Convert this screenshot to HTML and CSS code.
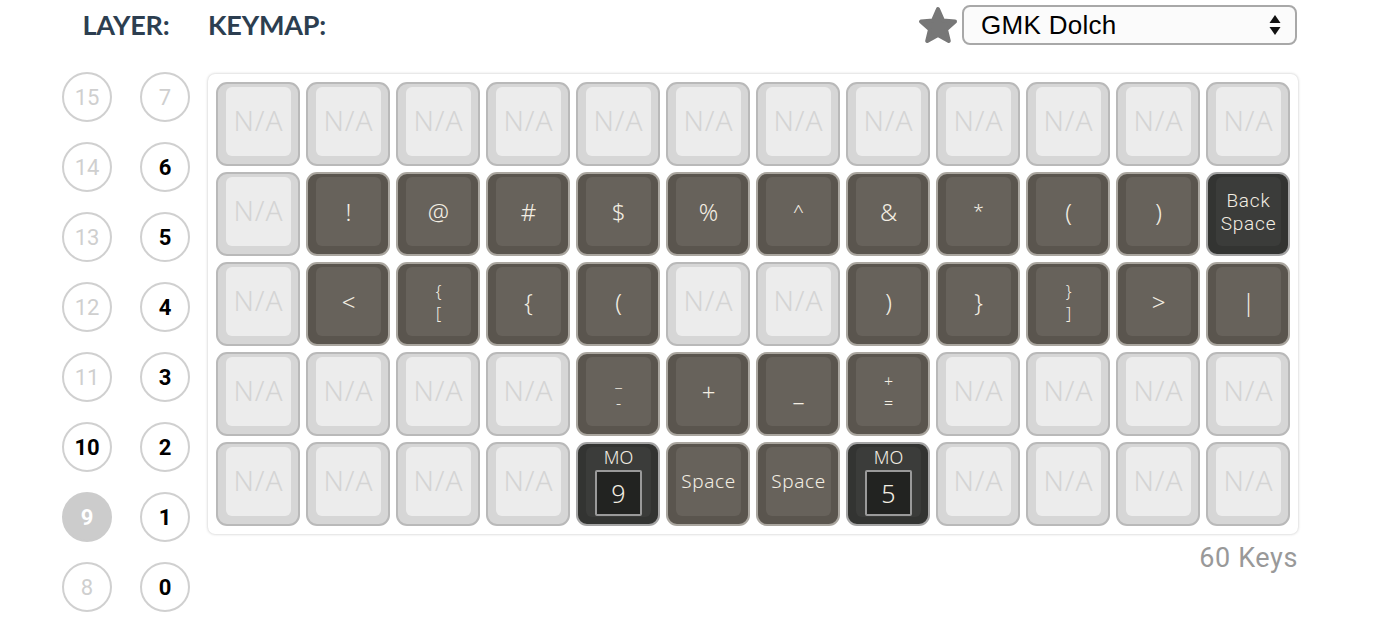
FILE: index.html
```html
<!DOCTYPE html>
<html>
<head>
    <title>Keymap</title>
    <link rel="stylesheet" href="styles.css">
</head>
<body>
<div class="page">
    <div class="layers">
        <h2 class="title layer-title">LAYER:</h2>
        <div class="layer-grid">
            <div class="layer">15</div>
            <div class="layer">14</div>
            <div class="layer">13</div>
            <div class="layer">12</div>
            <div class="layer">11</div>
            <div class="layer used">10</div>
            <div class="layer current">9</div>
            <div class="layer">8</div>
            <div class="layer">7</div>
            <div class="layer used">6</div>
            <div class="layer used">5</div>
            <div class="layer used">4</div>
            <div class="layer used">3</div>
            <div class="layer used">2</div>
            <div class="layer used">1</div>
            <div class="layer used">0</div>
        </div>
    </div>
    <div class="keymap">
        <div class="keymap-head">
            <h2 class="title">KEYMAP:</h2>
            <div class="colorway">
                <svg class="star" width="40" height="38" viewBox="0 0 40 38">
                    <polygon points="20,3 25,14.5 37,15.5 28,23.5 30.8,35 20,29 9.2,35 12,23.5 3,15.5 15,14.5" fill="#777" stroke="#777" stroke-width="4" stroke-linejoin="round"/>
                </svg>
                <div class="select">
                    <span>GMK Dolch</span>
                    <svg width="12" height="22" viewBox="0 0 12 22">
                        <polygon points="6,1 11.5,9 0.5,9" fill="#111"/>
                        <polygon points="0.5,13 11.5,13 6,21" fill="#111"/>
                    </svg>
                </div>
            </div>
        </div>
        <div class="board">
            <!-- row 1 -->
            <div class="key na"><div class="cap">N/A</div></div>
            <div class="key na"><div class="cap">N/A</div></div>
            <div class="key na"><div class="cap">N/A</div></div>
            <div class="key na"><div class="cap">N/A</div></div>
            <div class="key na"><div class="cap">N/A</div></div>
            <div class="key na"><div class="cap">N/A</div></div>
            <div class="key na"><div class="cap">N/A</div></div>
            <div class="key na"><div class="cap">N/A</div></div>
            <div class="key na"><div class="cap">N/A</div></div>
            <div class="key na"><div class="cap">N/A</div></div>
            <div class="key na"><div class="cap">N/A</div></div>
            <div class="key na"><div class="cap">N/A</div></div>
            <!-- row 2 -->
            <div class="key na"><div class="cap">N/A</div></div>
            <div class="key"><div class="cap">!</div></div>
            <div class="key"><div class="cap">@</div></div>
            <div class="key"><div class="cap">#</div></div>
            <div class="key"><div class="cap">$</div></div>
            <div class="key"><div class="cap">%</div></div>
            <div class="key"><div class="cap small">^</div></div>
            <div class="key"><div class="cap">&amp;</div></div>
            <div class="key"><div class="cap small">*</div></div>
            <div class="key"><div class="cap">(</div></div>
            <div class="key"><div class="cap">)</div></div>
            <div class="key mod"><div class="cap word two"><span>Back</span><span>Space</span></div></div>
            <!-- row 3 -->
            <div class="key na"><div class="cap">N/A</div></div>
            <div class="key"><div class="cap">&lt;</div></div>
            <div class="key"><div class="cap pair"><span>{</span><span>[</span></div></div>
            <div class="key"><div class="cap">{</div></div>
            <div class="key"><div class="cap">(</div></div>
            <div class="key na"><div class="cap">N/A</div></div>
            <div class="key na"><div class="cap">N/A</div></div>
            <div class="key"><div class="cap">)</div></div>
            <div class="key"><div class="cap">}</div></div>
            <div class="key"><div class="cap pair"><span>}</span><span>]</span></div></div>
            <div class="key"><div class="cap">&gt;</div></div>
            <div class="key"><div class="cap">|</div></div>
            <!-- row 4 -->
            <div class="key na"><div class="cap">N/A</div></div>
            <div class="key na"><div class="cap">N/A</div></div>
            <div class="key na"><div class="cap">N/A</div></div>
            <div class="key na"><div class="cap">N/A</div></div>
            <div class="key"><div class="cap pair"><span>_</span><span>-</span></div></div>
            <div class="key"><div class="cap">+</div></div>
            <div class="key"><div class="cap">_</div></div>
            <div class="key"><div class="cap pair"><span>+</span><span>=</span></div></div>
            <div class="key na"><div class="cap">N/A</div></div>
            <div class="key na"><div class="cap">N/A</div></div>
            <div class="key na"><div class="cap">N/A</div></div>
            <div class="key na"><div class="cap">N/A</div></div>
            <!-- row 5 -->
            <div class="key na"><div class="cap">N/A</div></div>
            <div class="key na"><div class="cap">N/A</div></div>
            <div class="key na"><div class="cap">N/A</div></div>
            <div class="key na"><div class="cap">N/A</div></div>
            <div class="key mod"><div class="cap layer-key"><span>MO</span><span class="layer-box">9</span></div></div>
            <div class="key"><div class="cap word">Space</div></div>
            <div class="key"><div class="cap word">Space</div></div>
            <div class="key mod"><div class="cap layer-key"><span>MO</span><span class="layer-box">5</span></div></div>
            <div class="key na"><div class="cap">N/A</div></div>
            <div class="key na"><div class="cap">N/A</div></div>
            <div class="key na"><div class="cap">N/A</div></div>
            <div class="key na"><div class="cap">N/A</div></div>
        </div>
        <div class="key-count">60 Keys</div>
    </div>
</div>
</body>
</html>
```

FILE: styles.css
```css
body {
    margin: 0;
    background: #fff;
    font-family: Roboto, "Liberation Sans", sans-serif;
}
.page {
    display: flex;
    gap: 18px;
    padding-left: 62px;
}
.title {
    margin: 0;
    height: 50px;
    line-height: 50px;
    font-family: Lato, sans-serif;
    font-weight: bold;
    font-size: 27px;
    color: #2c3e50;
    letter-spacing: -0.2px;
}
.layers {
    width: 128px;
}
.layer-title {
    text-align: center;
}
.layer-grid {
    margin-top: 22px;
    display: grid;
    grid-template-columns: 50px 50px;
    grid-template-rows: repeat(8, 50px);
    grid-auto-flow: column;
    column-gap: 28px;
    row-gap: 20px;
}
.layer {
    box-sizing: border-box;
    width: 50px;
    height: 50px;
    border: 2px solid #d0d0d0;
    border-radius: 50%;
    display: flex;
    align-items: center;
    justify-content: center;
    font-size: 22px;
    color: #cfcfcf;
}
.layer.used {
    color: #000;
    font-weight: bold;
}
.layer.current {
    background: #cccccc;
    border-color: #cccccc;
    color: #fff;
    font-weight: bold;
}
.keymap {
    width: 1090px;
}
.keymap-head {
    height: 50px;
    display: flex;
    align-items: center;
    justify-content: space-between;
}
.colorway {
    display: flex;
    align-items: center;
    gap: 4px;
    margin-right: 1px;
}
.star {
    display: block;
}
.select {
    box-sizing: border-box;
    width: 335px;
    height: 40px;
    border: 2px solid #a8a8a8;
    border-radius: 8px;
    background: #fbfbfb;
    display: flex;
    align-items: center;
    justify-content: space-between;
    padding: 0 14px 0 17px;
    font-family: "Liberation Sans", sans-serif;
    font-size: 26px;
    letter-spacing: 0.3px;
    color: #000;
}
.board {
    margin-top: 24px;
    box-sizing: border-box;
    width: 1090px;
    padding: 8px;
    border-radius: 7px;
    box-shadow: 0 0 3px rgba(0, 0, 0, 0.25);
    display: grid;
    grid-template-columns: repeat(12, 84px);
    grid-auto-rows: 84px;
    gap: 6px;
}
.key {
    box-sizing: border-box;
    border: 2px solid #aaa69f;
    border-radius: 11px;
    background: #5a554e;
    padding: 3px 7px 8px 8px;
    font-family: "Noto Sans", "DejaVu Sans", sans-serif;
    font-weight: 300;
    color: #f3eee3;
}
.cap {
    height: 100%;
    border-radius: 6px;
    background: #67625b;
    display: flex;
    flex-direction: column;
    align-items: center;
    justify-content: center;
    font-size: 24px;
    line-height: 1;
}
.key.na {
    border-color: #b9b9b9;
    background: #d6d6d6;
    color: #d4d4d4;
}
.key.na .cap {
    box-sizing: border-box;
    padding-bottom: 3px;
    background: #ececec;
    font-size: 28px;
    letter-spacing: 1px;
}
.key.mod {
    border-color: #a5a5a5;
    background: #333432;
}
.key.mod .cap {
    background: #3b3c3a;
}
.cap.small {
    font-size: 19px;
}
.cap.word {
    font-size: 19px;
    letter-spacing: 0.6px;
    text-align: center;
}
.cap.two {
    font-family: Roboto, sans-serif;
    font-size: 19px;
    letter-spacing: 0.8px;
}
.cap.two span {
    line-height: 23px;
}
.cap.pair {
    font-size: 16px;
}
.cap.pair span {
    line-height: 22px;
    height: 22px;
}
.cap.layer-key {
    justify-content: flex-start;
    font-size: 18px;
    padding-top: 1px;
}
.layer-box {
    box-sizing: border-box;
    margin-top: 4px;
    width: 47px;
    height: 46px;
    border: 2px solid #9a9a9a;
    border-radius: 2px;
    background: #222321;
    display: flex;
    align-items: center;
    justify-content: center;
    font-size: 25px;
}
.key-count {
    margin-top: 8px;
    text-align: right;
    font-size: 27px;
    color: #999;
    letter-spacing: 0.6px;
}
```
